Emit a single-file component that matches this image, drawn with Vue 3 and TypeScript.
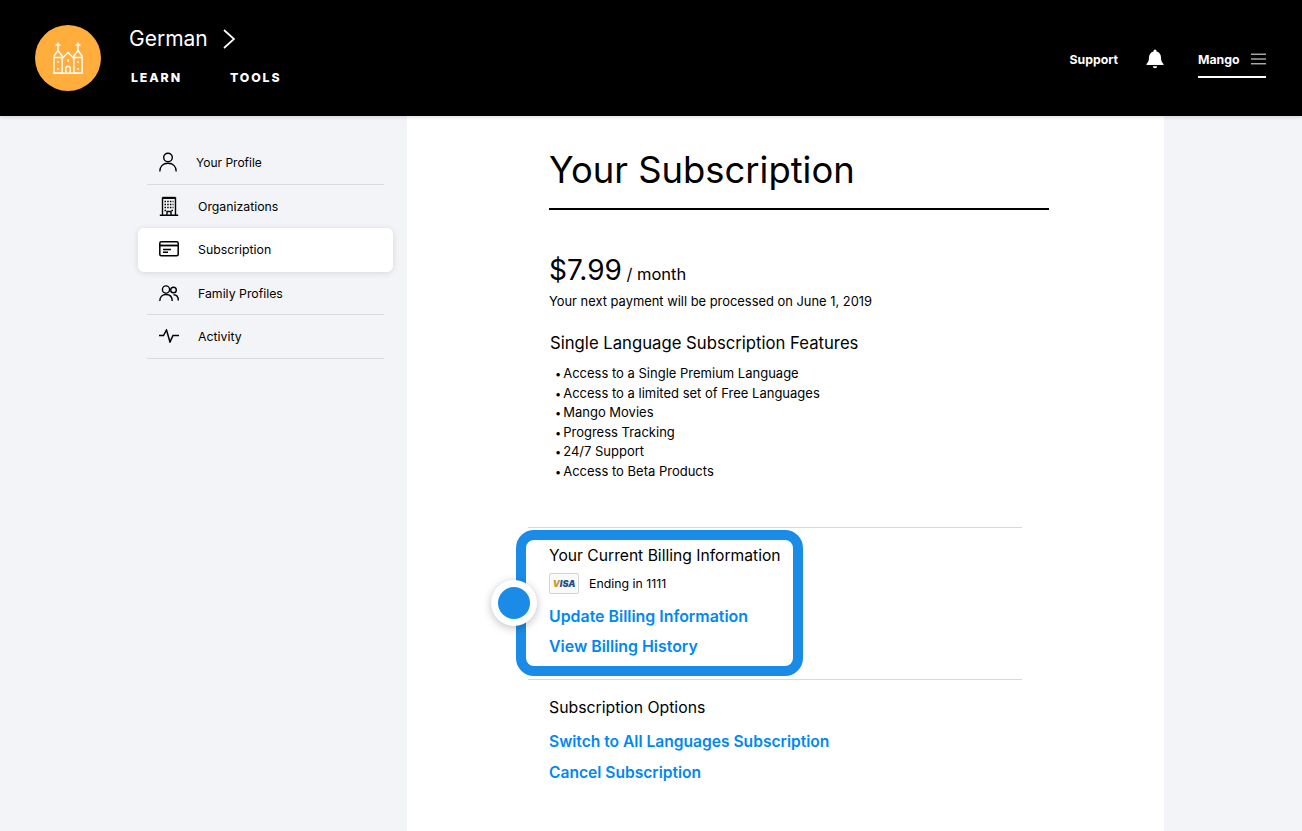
<script setup lang="ts">
const features: string[] = [
  'Access to a Single Premium Language',
  'Access to a limited set of Free Languages',
  'Mango Movies',
  'Progress Tracking',
  '24/7 Support',
  'Access to Beta Products',
]
</script>

<template>
  <div class="page">
    <header class="top">
      <div class="logo">
        <svg width="30" height="32" viewBox="0 0 30 32" fill="none" stroke="#fff" stroke-width="1.400">
          <path d="M.9 31V14L5 8.500 9.100 14v17zM20.900 31V14L25 8.500l4.100 5.500v17zM.5 31.200h29M9.100 16.500L15 10.500l5.900 6M5 8.500V.5M2.500 3h5M25 8.500V.5M22.500 3h5M12.800 31v-4.500a2.200 2.200 0 0 1 4.400 0V31M15 17v3M5 19v2M5 26v2M25 19v2M25 26v2M.9 15.500h8.200M20.900 15.500h8.200" />
        </svg>
      </div>
      <div class="course">
        <div class="lang">
          <span>German</span>
          <svg width="14" height="20" viewBox="0 0 14 20" fill="none" stroke="#fff" stroke-width="1.700"><path d="M2 1l10 9-10 9" /></svg>
        </div>
        <nav class="tabs"><a>LEARN</a><a>TOOLS</a></nav>
      </div>
      <div class="right">
        <a class="support">Support</a>
        <svg class="bell" width="18" height="20" viewBox="0 0 18 20" fill="#fff">
          <path d="M9 .5A1.500 1.500 0 0 1 10.500 2v.5C13.500 3.200 15 5.700 15 8.500c0 3.500 1 5 2.500 6.500v1H.5v-1C2 13.500 3 12 3 8.500c0-2.800 1.500-5.300 4.500-6V2A1.500 1.500 0 0 1 9 .5zM6.800 17.200h4.400a2.200 2 0 0 1-4.400 0z" />
        </svg>
        <div class="user">
          <span>Mango</span>
          <svg width="16" height="12" viewBox="0 0 16 12" stroke="#fff" stroke-width="1"><path d="M0 1h16M0 6h16M0 11h16" /></svg>
        </div>
      </div>
    </header>

    <div class="shell">
      <aside class="side">
        <a class="item first">
          <svg class="ic" width="20" height="20" viewBox="0 0 20 20" fill="none" stroke="#000" stroke-width="1.400"><circle cx="10" cy="5.500" r="4.300" /><path d="M1.800 19.500c0-5 3.300-8.200 8.200-8.200s8.200 3.200 8.200 8.200" /></svg>
          <span>Your Profile</span>
        </a>
        <a class="item">
          <svg class="ic" width="20" height="20" viewBox="0 0 20 20" fill="none" stroke="#000" stroke-width="1.400"><path d="M3.500 19V2h13v17M.8 19.200h18.400M8 19v-3.500h4V19" /><path d="M3.500 1.800h13" stroke-width="2" /><path stroke-dasharray="1.500 1.200" d="M5.500 5.500h9M5.500 8.500h9M5.500 11.500h9M5.500 14.500h2M12.500 14.500h2" /></svg>
          <span>Organizations</span>
        </a>
        <a class="item active">
          <svg class="ic" width="20" height="16" viewBox="0 0 20 16" fill="none" stroke="#000" stroke-width="1.500"><rect x=".8" y=".8" width="18.400" height="14" rx="1.500" /><path d="M.8 4.500h18.400" stroke-width="1.800" /><path d="M4 8.500h8M4 11.200h5" /></svg>
          <span>Subscription</span>
        </a>
        <a class="item family">
          <svg class="ic" width="20" height="17" viewBox="0 0 20 17" fill="none" stroke="#000" stroke-width="1.400"><circle cx="7" cy="4.500" r="3.600" /><path d="M.8 16c0-4 2.500-6.500 6.200-6.500s6.200 2.500 6.200 6.500" /><circle cx="14.500" cy="5" r="2.800" /><path d="M14.500 9.800c2.800 0 4.800 2.200 4.800 5.700" /></svg>
          <span>Family Profiles</span>
        </a>
        <a class="item">
          <svg class="ic" width="20" height="14" viewBox="0 0 20 14" fill="none" stroke="#000" stroke-width="1.500"><path d="M0 6.500h4.500L7.500 1l3.500 12 3-6.500h6" /></svg>
          <span>Activity</span>
        </a>
      </aside>

      <main class="main">
        <h1>Your Subscription</h1>
        <div class="price"><b>$7.99</b> <span>/ month</span></div>
        <p class="next">Your next payment will be processed on June 1, 2019</p>
        <h2 class="feat">Single Language Subscription Features</h2>
        <ul>
          <li v-for="f in features" :key="f">{{ f }}</li>
        </ul>
        <hr class="rule" />
        <section class="billing">
          <span class="hot"><i></i></span>
          <h2>Your Current Billing Information</h2>
          <div class="card">
            <span class="visa">VISA</span>
            <span>Ending in 1111</span>
          </div>
          <a class="link one">Update Billing Information</a>
          <a class="link two">View Billing History</a>
        </section>
        <hr class="rule" />
        <h2 class="opts">Subscription Options</h2>
        <a class="link sw">Switch to All Languages Subscription</a>
        <a class="link can">Cancel Subscription</a>
      </main>
    </div>
  </div>
</template>

<style>
html, body { margin: 0; background: #f3f4f7; }
</style>

<style scoped>
.page { height: 831px; overflow: hidden; background: #f3f4f7; font-family: Inter, Lato, sans-serif; color: #000; }
a { display: block; }
.top { height: 116px; background: #000; color: #fff; display: flex; align-items: center; padding: 0 36px 0 35px; box-sizing: border-box; position: relative; z-index: 1; box-shadow: 0 1px 4px rgba(0,0,0,.15); }
.logo { width: 66px; height: 66px; border-radius: 50%; background: #ffad3d; display: flex; align-items: center; justify-content: center; }
.course { margin-left: 28px; margin-top: -6px; }
.lang { display: flex; align-items: center; gap: 14px; font-size: 21px; line-height: 28px; }
.tabs { display: flex; gap: 48px; margin: 17px 0 0 2px; font-size: 12.300px; font-weight: 800; letter-spacing: 1.900px; line-height: 16px; }
.right { margin-left: auto; display: flex; align-items: center; font-size: 12.300px; font-weight: 700; }
.bell { margin: 2px 34px 0 28px; }
.user { display: flex; align-items: center; gap: 11px; width: 68px; height: 38px; padding-top: 2px; border-bottom: 2px solid #fff; box-sizing: border-box; margin-top: 2px; }
.support { margin-top: 2px; }
.shell { display: flex; align-items: stretch; height: 715px; }
.side { width: 255px; margin: 25px 0 0 138px; flex: none; font-size: 12.300px; }
.item { display: flex; align-items: center; height: 43.500px; margin: 0 9px; border-bottom: 1px solid #d9dbdf; box-sizing: border-box; }
.ic { width: 20px; margin: 0 19px 0 12px; flex: none; }
.item.first { font-size: 12px; }
.item.first .ic { margin-left: 11px; margin-right: 18px; }
.item.active { margin: 0; padding: 0 0 1px 9px; background: #fff; border-radius: 6px; border: 0; box-shadow: 0 1px 6px rgba(0,0,0,.12); }
.item.family { padding-top: 1px; }
.item:nth-child(2) { border-bottom: 0; }
.main { width: 757px; margin-left: 14px; background: #fff; padding: 29px 0 0 142px; box-sizing: border-box; }
h1 { margin: 0; width: 500px; height: 65px; border-bottom: 2px solid #000; font-size: 36.400px; line-height: 50px; font-weight: 400; box-sizing: border-box; }
.price { margin-top: 42px; line-height: 36px; }
.price b { font-size: 28px; font-weight: 400; }
.price span { font-size: 16.500px; }
.next { margin: 1px 0 0; font-size: 12.900px; line-height: 18px; }
h2 { font-size: 15.650px; line-height: 22px; font-weight: 400; margin: 0; }
.feat { margin: 21px 0 0 1px; font-size: 16.700px; }
ul { margin: 10px 0 0 6px; padding: 0; list-style: none; font-size: 13px; line-height: 19.600px; }
li::before { content: "•"; margin-right: 2px; font-size: 11px; line-height: 0; }
.rule { margin: 45px 0 0 -21px; width: 494px; border: 0; border-top: 1px solid #d9d9d9; }
.billing { position: relative; width: 287px; height: 146px; margin: 2px 0 0 -33px; padding: 6px 0 0 23px; box-sizing: border-box; border: 10px solid #1a8ce8; border-radius: 18px; background: #fff; z-index: 1; }
.billing h2 { margin-top: -1px; }
.hot { position: absolute; left: -35px; top: 40px; width: 46px; height: 46px; border-radius: 50%; background: #fff; box-shadow: 0 2px 8px rgba(0,0,0,.25); display: flex; align-items: center; justify-content: center; }
.hot i { width: 32px; height: 32px; border-radius: 50%; background: #1a8ce8; }
.card { display: flex; align-items: center; gap: 10px; font-size: 12.300px; margin-top: 6px; height: 21px; }
.visa { width: 30px; height: 21px; box-sizing: border-box; border: 1px solid #d4d4d4; border-radius: 2px; background: #fafafa; color: #1a4f8e; font-size: 9px; font-weight: 900; font-style: italic; text-align: center; line-height: 19px; }
.visa::first-letter { color: #c29a35; }
.link { color: #0088f2; font-size: 15.900px; font-weight: 600; line-height: 22px; }
.one { margin-top: 12px; }
.two { margin-top: 8px; }
.billing + .rule { margin-top: 3px; }
.opts { margin-top: 17px; font-size: 15.800px; }
.sw { margin-top: 12px; font-size: 15.600px; }
.can { margin-top: 9px; font-size: 15.600px; }
</style>
